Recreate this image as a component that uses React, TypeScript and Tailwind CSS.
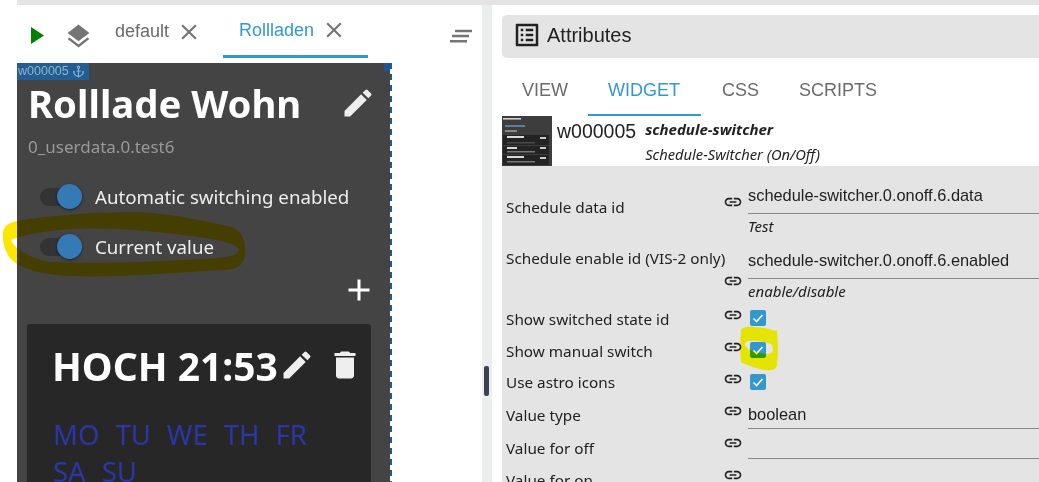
import React from "react";
import { Anchor } from "lucide-react";

const seg = "font-['Noto_Sans','Open_Sans',sans-serif]";
const ari = "font-['Liberation_Sans',Arial,sans-serif]";

const P = {
  close: "M19 6.41 17.59 5 12 10.59 6.41 5 5 6.41 10.59 12 5 17.59 6.41 19 12 13.41 17.59 19 19 17.59 13.41 12z",
  layers: "m11.99 18.54-7.37-5.73L3 14.07l9 7 9-7-1.63-1.27zM12 16l7.36-5.73L21 9l-9-7-9 7 1.63 1.27z",
  edit: "M3 17.25V21h3.75L17.81 9.94l-3.75-3.75zM20.71 7.04c.39-.39.39-1.02 0-1.41l-2.34-2.34a.9959.9959 0 0 0-1.41 0l-1.83 1.83 3.75 3.75z",
  del: "M6 19c0 1.1.9 2 2 2h8c1.1 0 2-.9 2-2V7H6zM19 4h-3.5l-1-1h-5l-1 1H5v2h14z",
  add: "M19 13h-6v6h-2v-6H5v-2h6V5h2v6h6z",
  link: "M3.9 12c0-1.71 1.39-3.1 3.1-3.1h4V7H7c-2.76 0-5 2.24-5 5s2.24 5 5 5h4v-1.9H7c-1.71 0-3.1-1.39-3.1-3.1M8 13h8v-2H8zm9-6h-4v1.9h4c1.71 0 3.1 1.39 3.1 3.1s-1.39 3.1-3.1 3.1h-4V17h4c2.76 0 5-2.24 5-5s-2.24-5-5-5",
  list: "M19 5v14H5V5zm1.1-2H3.9c-.5 0-.9.4-.9.9v16.2c0 .4.4.9.9.9h16.2c.4 0 .9-.5.9-.9V3.9c0-.5-.5-.9-.9-.9M11 7h6v2h-6zm0 4h6v2h-6zm0 4h6v2h-6zM7 7h2v2H7zm0 4h2v2H7zm0 4h2v2H7z",
};

function Ico({ d, size, className = "" }: { d: string; size: number; className?: string }) {
  return (
    <svg viewBox="0 0 24 24" width={size} height={size} fill="currentColor" className={"shrink-0 " + className}>
      <path d={d} />
    </svg>
  );
}

function Sw({ label, mt }: { label: string; mt: string }) {
  return (
    <div className={"flex items-center h-[26px] " + mt}>
      <div className="relative w-[43px] h-[26px] ml-[12px]">
        <div className="absolute left-0 top-[4px] w-[36px] h-[18px] rounded-full bg-[#333333]" />
        <div className="absolute left-[17px] top-0 w-[25px] h-[25px] rounded-full bg-[#337ab7] shadow-[0_1px_3px_rgba(0,0,0,0.5)]" />
      </div>
      <span className={"ml-[12px] text-[18.7px] leading-[26px] text-[#eeeeee] " + seg}>{label}</span>
    </div>
  );
}

function Chk() {
  return (
    <span className="block w-[16px] h-[16px] rounded-[2px] bg-[#3399cc] ml-[2px]">
      <svg viewBox="0 0 16 16" width={16} height={16} fill="none" stroke="#ffffff" strokeWidth="1.6">
        <path d="M3.5 8.5 6.5 11.5 12.5 5" />
      </svg>
    </span>
  );
}

function Row({ label, h, lt, it, children }: { label: string; h: string; lt: string; it: string; children?: React.ReactNode }) {
  return (
    <div className={"flex items-start " + h}>
      <div className={"w-[217px] ml-[4px] whitespace-nowrap text-[15.3px] leading-[20px] text-[#222222] " + seg + " " + lt}>{label}</div>
      <div className={"w-[25px] text-[#222222] " + it}>
        <Ico d={P.link} size={20} />
      </div>
      <div className="flex-1 min-w-0">{children}</div>
    </div>
  );
}

function Val({ text, sub, pt, uh }: { text?: string; sub?: string; pt: string; uh: string }) {
  return (
    <div className={pt}>
      <div className={"border-b border-[#8a8a8a] text-[16.4px] leading-[20px] text-[#222222] " + ari + " " + uh}>{text}</div>
      {sub && <div className={"mt-[2px] text-[15px] leading-[20px] italic text-[#222222] " + seg}>{sub}</div>}
    </div>
  );
}

export default function App() {
  return (
    <div className="relative w-[1039px] h-[482px] overflow-hidden bg-white">
      <div className="h-[5px] ml-[17px] bg-[#e4e4e4]" />
      <div className="flex h-[477px] pl-[17px]">
        {/* left column */}
        <div className="w-[465px] shrink-0">
          <div className="flex h-[58px] items-start">
            <svg viewBox="0 0 13 17" width={13} height={17} className="ml-[14px] mt-[22px] shrink-0">
              <path d="M0 0 13 8.5 0 17z" fill="#008000" />
            </svg>
            <Ico d={P.layers} size={29} className="ml-[20px] mt-[17px] text-[#757575]" />
            <div className={"flex items-center h-[53px] ml-[22px] text-[18px] text-[#6b6b6b] " + ari}>
              <span>default</span>
              <Ico d={P.close} size={26} className="ml-[7px] text-[#757575]" />
            </div>
            <div className={"flex items-center h-[53px] w-[145px] pl-[16px] ml-[21px] border-b-[3px] border-[#3399cc] text-[18px] text-[#3399cc] " + ari}>
              <span>Rollladen</span>
              <Ico d={P.close} size={26} className="ml-[7px] text-[#757575]" />
            </div>
            <svg viewBox="0 0 24 14" width={24} height={14} className="ml-[81px] mt-[24px] shrink-0" stroke="#757575" strokeWidth="2.4" fill="none">
              <path d="M6 2H23M3 7H20M1 12.3H18" />
            </svg>
          </div>
          <div className="relative w-[375px] h-[500px] pr-[2px] bg-white">
            <div className={"h-full bg-[#444444] pl-[11px] pr-[14px] pt-[18px] " + seg}>
              <div className="flex items-center justify-between h-[44px]">
                <span className="text-[38.3px] leading-[44px] font-bold text-white whitespace-nowrap">Rolllade Wohn</span>
                <Ico d={P.edit} size={36} className="text-[#eeeeee]" />
              </div>
              <div className="mt-[10px] text-[17px] leading-[24px] text-[#999999]">0_userdata.0.test6</div>
              <Sw label="Automatic switching enabled" mt="mt-[25px]" />
              <Sw label="Current value" mt="mt-[24px]" />
              <div className="flex justify-end mt-[12px] h-[36px] text-white">
                <Ico d={P.add} size={36} className="-mr-[1px]" />
              </div>
              <div className="mt-[16px] -ml-[1px] mr-[5px] rounded-[3px] bg-[#272727] pl-[25px] pt-[20px] h-[300px]">
                <div className="flex items-center h-[44px] text-white">
                  <span className="text-[39px] leading-[44px] font-bold whitespace-nowrap">HOCH 21:53</span>
                  <Ico d={P.edit} size={36} className="ml-[1px] -mt-[2px] text-[#eeeeee]" />
                  <Ico d={P.del} size={36} className="ml-[12px] -mt-[2px] text-[#eeeeee]" />
                </div>
                <div className="mt-[28px] ml-[1px] w-[280px] flex flex-wrap gap-x-[16px] text-[27.5px] leading-[37px] text-[#2b36a8]">
                  {["MO", "TU", "WE", "TH", "FR", "SA", "SU"].map((d) => (
                    <span key={d}>{d}</span>
                  ))}
                </div>
              </div>
            </div>
            {/* selection overlay */}
            <div className={"absolute left-0 top-0 w-[72px] h-[17px] bg-[#235d92] flex items-center pl-[1px] text-[12.5px] text-[#8fb3cf] " + ari}>
              w000005
              <Anchor size={13} className="ml-[3px]" />
            </div>
            <div className="absolute right-0 top-0 w-[8px] h-[8px] bg-[#1a5596]" />
            <div className="absolute right-0 top-0 bottom-0 w-[2px] bg-[repeating-linear-gradient(to_bottom,#1e5a96_0,#1e5a96_6px,#ffffff_6px,#ffffff_11px)]" />
          </div>
        </div>

        {/* divider */}
        <div className="relative w-[10px] shrink-0 bg-[#eceeee]">
          <div className="absolute left-[2px] top-[361px] w-[5px] h-[30px] rounded-[2px] bg-[#3f3f55]" />
        </div>

        {/* right column */}
        <div className="flex-1 min-w-0 ml-[10px]">
          <div className="mt-[10px] h-[43px] rounded-tl-[5px] rounded-bl-[5px] bg-[#e4e4e4] flex items-center pl-[10px] pb-[3px]">
            <Ico d={P.list} size={30} className="text-[#222222]" />
            <span className={"ml-[5px] text-[20px] text-[#222222] " + ari}>Attributes</span>
          </div>
          <div className={"flex h-[58px] text-[18px] " + ari}>
            <div className="w-[86px] pl-[20px] pt-[19px] text-[#6b6b6b]">VIEW</div>
            <div className="w-[113px] pl-[20px] pt-[19px] text-[#3399cc] border-b-[2px] border-[#3399cc]">WIDGET</div>
            <div className="w-[78px] pl-[21px] pt-[19px] text-[#6b6b6b]">CSS</div>
            <div className="pl-[20px] pt-[19px] text-[#6b6b6b]">SCRIPTS</div>
          </div>
          <div className="flex h-[50px]">
            <svg viewBox="0 0 50 50" width={50} height={50} className="shrink-0">
              <rect width="50" height="50" fill="#3d3d3d" />
              <rect x="1" y="2" width="18" height="1.6" fill="#cfcfcf" />
              <rect x="3" y="9" width="20" height="2" fill="#5b7f9f" />
              <rect x="3" y="14" width="12" height="2" fill="#888888" />
              <rect x="1" y="19" width="46" height="10" fill="#232323" />
              <rect x="5" y="20" width="17" height="2" fill="#d8d8d8" />
              <rect x="5" y="26" width="28" height="1.5" fill="#4a4a4a" />
              <rect x="1" y="30" width="46" height="8" fill="#232323" />
              <rect x="5" y="31" width="10" height="2" fill="#d8d8d8" />
              <rect x="5" y="35" width="28" height="1.5" fill="#777777" />
              <rect x="1" y="39" width="46" height="10" fill="#232323" />
              <rect x="5" y="40" width="17" height="2" fill="#d8d8d8" />
              <rect x="5" y="45" width="28" height="1.5" fill="#777777" />
              <rect x="38" y="21" width="6" height="2" fill="#cccccc" />
              <rect x="38" y="31" width="6" height="2" fill="#cccccc" />
              <rect x="38" y="41" width="6" height="2" fill="#cccccc" />
            </svg>
            <div className={"ml-[5px] pt-[3px] text-[19.5px] leading-[24px] text-[#222222] " + ari}>w000005</div>
            <div className={"ml-[9px] pt-[3px] text-[14.7px] leading-[20px] italic text-[#222222] whitespace-nowrap " + seg}>
              <div className="font-bold text-[15px]">schedule-switcher</div>
              <div className="mt-[5px]">Schedule-Switcher (On/Off)</div>
            </div>
          </div>
          <div className="bg-[#e4e4e4] h-[320px] pt-[14px]">
            <Row label="Schedule data id" h="h-[58px]" lt="pt-[17px]" it="pt-[12px]">
              <Val text="schedule-switcher.0.onoff.6.data" pt="pt-[5px]" uh="h-[29px]" sub="Test" />
            </Row>
            <Row label="Schedule enable id (VIS-2 only)" h="h-[67px]" lt="pt-[10px]" it="pt-[33px]">
              <Val text="schedule-switcher.0.onoff.6.enabled" pt="pt-[12px]" uh="h-[29px]" sub="enable/disable" />
            </Row>
            <Row label="Show switched state id" h="h-[32px]" lt="pt-[4px]" it="pt-[0px]">
              <div className="pt-[5px]"><Chk /></div>
            </Row>
            <Row label="Show manual switch" h="h-[32px]" lt="pt-[4px]" it="pt-[0px]">
              <div className="pt-[5px]"><Chk /></div>
            </Row>
            <Row label="Use astro icons" h="h-[32px]" lt="pt-[3px]" it="pt-[0px]">
              <div className="pt-[5px]"><Chk /></div>
            </Row>
            <Row label="Value type" h="h-[32px]" lt="pt-[4px]" it="pt-[0px]">
              <Val text="boolean" pt="pt-[3px]" uh="h-[25px]" />
            </Row>
            <Row label="Value for off" h="h-[32px]" lt="pt-[5px]" it="pt-[0px]">
              <Val pt="pt-[2px]" uh="h-[24px]" />
            </Row>
            <Row label="Value for on" h="h-[32px]" lt="pt-[5px]" it="pt-[0px]" />
          </div>
        </div>
      </div>

      {/* highlighter marks */}
      <svg viewBox="0 0 1039 482" width={1039} height={482} className="absolute left-0 top-0 mix-blend-multiply pointer-events-none">
        <path
          fillRule="evenodd"
          fill="#ffe600"
          d="M3 232C4 224 12 222 22 220C50 216 90 212 135 212C170 213 205 221 232 227C242 232 246 240 245 255C243 266 238 269 225 270C180 272 120 278 70 276C45 275 25 270 14 262C6 255 2 245 3 232ZM11 240C20 236 40 232 60 230C100 226 150 230 205 238C225 241 238 245 239 250C239 256 225 258 200 259C150 262 90 264 50 262C30 258 15 250 11 240Z"
        />
        <path
          fillRule="evenodd"
          fill="#ffff00"
          d="M741 330C742 327 748 326 755 327C765 328 772 329 774 331L777 330C778 345 778 355 777 365C776 370 771 371 765 370C757 369 748 365 742 363C740 362 740 345 741 330ZM745 345C746 350 760 354 768 354C773 354 774 348 772 345C770 342 755 340 750 341C746 341 745 342 745 345Z"
        />
      </svg>
    </div>
  );
}
